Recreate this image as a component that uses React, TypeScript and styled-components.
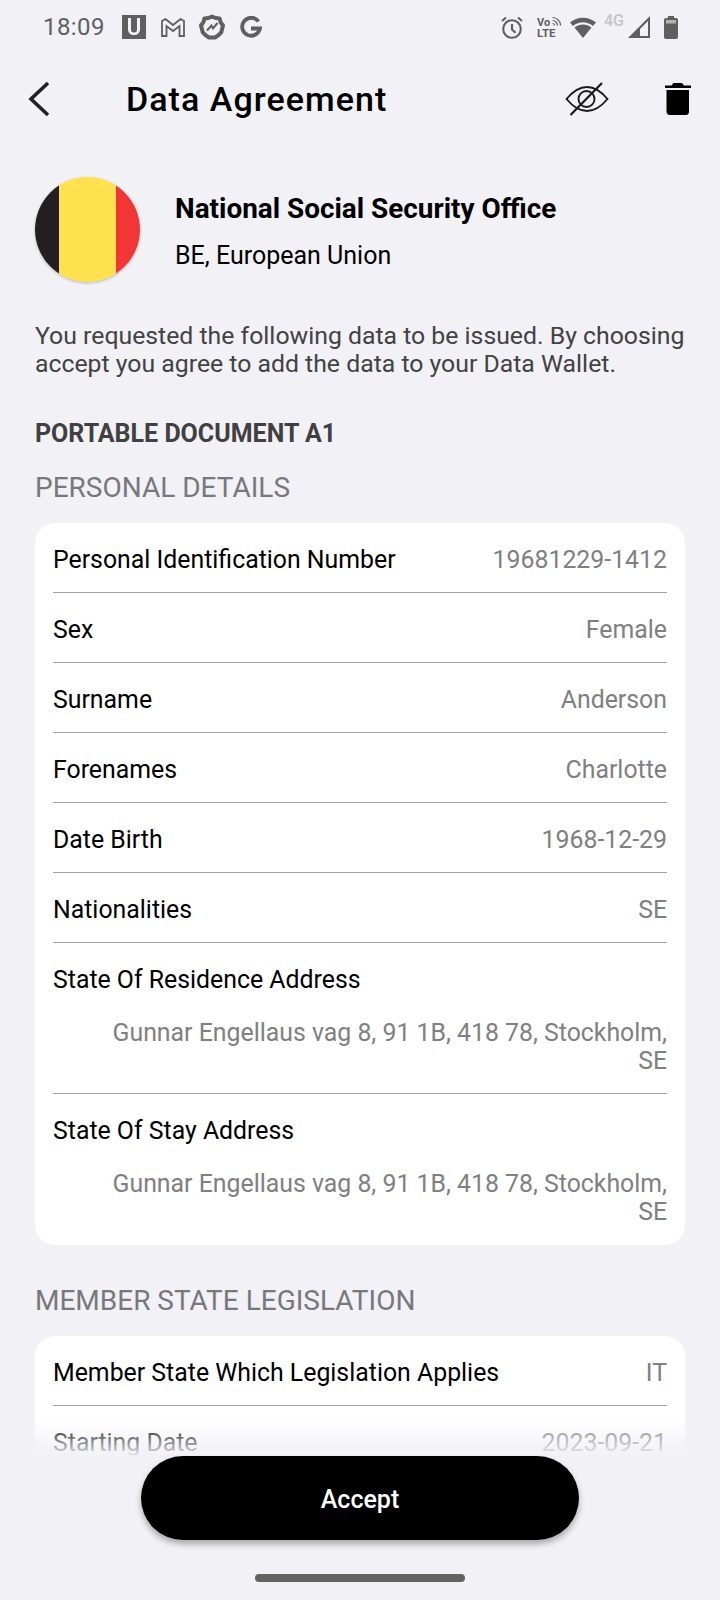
import React from "react";
import styled, { createGlobalStyle } from "styled-components";

const Global = createGlobalStyle`
  html, body { margin: 0; padding: 0; background: #f1f1f6; }
  * { box-sizing: border-box; }
`;

const Page = styled.div`
  width: 720px;
  height: 1600px;
  background: #f1f1f6;
  font-family: Roboto, "Liberation Sans", sans-serif;
  display: flex;
  flex-direction: column;
  overflow: hidden;
`;

const StatusBar = styled.div`
  height: 54px;
  flex: none;
  padding: 0 42px 0 43px;
  display: flex;
  align-items: center;
  color: #5f5f5f;
`;
const Time = styled.span`
  font-size: 24px;
  line-height: 34px;
  letter-spacing: 0.4px;
`;
const StatusIcon = styled.span<{ $gap: number }>`
  display: flex;
  margin-left: ${(p) => p.$gap}px;
`;
const StatusRight = styled.div`
  margin-left: auto;
  display: flex;
  align-items: center;
`;
const FourG = styled.span`
  margin: -12px 0 0 8px;
  font-size: 16px;
  line-height: 16px;
  font-weight: 500;
  color: #c4c4c8;
`;

const Header = styled.header`
  height: 89px;
  flex: none;
  padding: 0 29px 0 28px;
  display: flex;
  align-items: center;
`;
const Title = styled.h1`
  margin: 0 0 0 74px;
  font-size: 34px;
  font-weight: 500;
  letter-spacing: 1.05px;
  color: #000;
  flex: 1;
`;
const IconSlot = styled.span<{ $gap?: number }>`
  display: flex;
  margin-left: ${(p) => p.$gap ?? 0}px;
`;

const Scroll = styled.main`
  position: relative;
  flex: 1;
  overflow: hidden;
  padding: 34px 35px 0;
`;
const Fade = styled.div`
  position: absolute;
  left: 0;
  right: 0;
  bottom: 0;
  height: 36px;
  background: linear-gradient(to bottom, rgba(241, 241, 246, 0), rgba(241, 241, 246, 0.92));
`;

const Org = styled.section`
  display: flex;
  align-items: center;
  gap: 35px;
`;
const Flag = styled.div`
  width: 105px;
  height: 105px;
  border-radius: 50%;
  flex: none;
  box-shadow: 0 1px 3px rgba(0, 0, 0, 0.25);
  background: linear-gradient(
    to right,
    #231f20 0 24px,
    #ffe04f 24px 81px,
    #f23636 81px 100%
  );
`;
const OrgText = styled.div`
  display: flex;
  flex-direction: column;
  gap: 15px;
  padding-top: 5px;
`;
const OrgName = styled.div`
  font-size: 27.9px;
  line-height: 32px;
  font-weight: 700;
  color: #000;
`;
const OrgPlace = styled.div`
  font-size: 25px;
  line-height: 32px;
  color: #000;
`;
const Intro = styled.p`
  margin: 40px 0 0;
  font-size: 24.8px;
  line-height: 28px;
  color: #424242;
`;
const DocTitle = styled.h2`
  margin: 40px 0 0;
  font-size: 25px;
  line-height: 32px;
  font-weight: 700;
  color: #404040;
`;
const SectionTitle = styled.h3<{ $top: number }>`
  margin: ${(p) => p.$top}px 0 0;
  font-size: 28px;
  line-height: 34px;
  font-weight: 400;
  color: #78787c;
`;
const Card = styled.div`
  margin-top: 18px;
  background: #fff;
  border-radius: 20px;
  padding: 0 18px;
`;
const Row = styled.div`
  height: 70px;
  padding-top: 3px;
  display: flex;
  align-items: center;
  justify-content: space-between;
  border-bottom: 1px solid #a3a3a3;
  &:last-child { border-bottom: 0; }
`;
const Label = styled.span`
  font-size: 24.85px;
  line-height: 25px;
  color: #000;
`;
const Value = styled.span`
  font-size: 24.85px;
  line-height: 25px;
  color: #808080;
`;
const StackRow = styled.div`
  height: 151px;
  padding-top: 23px;
  border-bottom: 1px solid #a3a3a3;
  &:last-child { border-bottom: 0; }
`;
const StackLabel = styled(Label)`
  display: block;
  line-height: 28px;
`;
const StackValue = styled(Value)`
  display: block;
  margin: 25px 0 0 auto;
  width: 565px;
  line-height: 28px;
  text-align: right;
`;

const Footer = styled.footer`
  height: 145px;
  flex: none;
  display: flex;
  flex-direction: column;
  align-items: center;
`;
const AcceptButton = styled.button`
  margin-top: 1px;
  width: 438px;
  height: 84px;
  border: 0;
  border-radius: 42px;
  background: #000;
  color: #fff;
  font-family: inherit;
  font-size: 25px;
  font-weight: 500;
  padding-top: 4px;
  box-shadow: 0 4px 6px rgba(0, 0, 0, 0.3);
`;
const HomeBar = styled.div`
  margin-top: 34px;
  width: 210px;
  height: 8px;
  border-radius: 4px;
  background: #636363;
`;

const Back = () => (
  <svg width="24" height="36" viewBox="0 0 24 36" fill="none" stroke="#222" strokeWidth="3.6">
    <path d="M20 2 3 18l17 16" />
  </svg>
);
const EyeOff = () => (
  <svg width="44" height="34" viewBox="0 0 44 34" fill="none" stroke="#1a1a1a" strokeWidth="1.9">
    <path d="M1.500 17C9 8 16 5 22 5s13 3 20.500 12C35 26 28 29 22 29S9 26 1.500 17Z" />
    <circle cx="21.500" cy="17" r="8" />
    <path d="M37 1 5.500 33" strokeWidth="2.200" />
  </svg>
);
const Trash = () => (
  <svg width="26" height="32" viewBox="0 0 26 32" fill="#000">
    <path d="M8.500 0h8.500l2 2.500H26v2.500H0V2.500h6.500Z" />
    <path d="M1.500 7h22.500v21.500a3.500 3.500 0 0 1-3.500 3.500H5a3.500 3.500 0 0 1-3.500-3.500Z" />
  </svg>
);
const U = () => (
  <svg width="24" height="24" viewBox="0 0 24 24">
    <path fill="#5f5f5f" fillRule="evenodd" d="M0 0h24v24H0ZM6 3v11.500c0 3.500 2.500 5.500 6 5.500s6-2 6-5.500V3h-3v11.500c0 2-1 3-3 3s-3-1-3-3V3Z" />
  </svg>
);
const M = () => (
  <svg width="24" height="19" viewBox="0 0 24 19" fill="none" stroke="#5f5f5f" strokeWidth="1.800">
    <path d="M1 18V3l3.500-2L12 7l7.500-6L23 3v15h-4.500V8L12 13 5.500 8v10Z" />
  </svg>
);
const Gear = () => (
  <svg width="26" height="26" viewBox="0 0 26 26" fill="none" stroke="#5f5f5f">
    <path strokeWidth="4" strokeLinejoin="round" d="M13 2.500l3.600 1.500 4 .4 1 3.900L24 11.500l-.9 3.400-.9 3.500-2.700 2.700L16 23.500H10l-3.500-2.400-2.700-2.700-.9-3.500L2 11.500l2.400-3.200 1-3.900 4-.4Z" />
    <path strokeWidth="2" d="M8 16.500l4.500-5 1.500 3 4.500-5.500" />
  </svg>
);
const G = () => (
  <svg width="22" height="22" viewBox="0 0 22 22" fill="none" stroke="#5f5f5f" strokeWidth="3.800">
    <path d="M18.500 5.500A9 9 0 1 0 20 12.500H11" />
  </svg>
);
const Alarm = () => (
  <svg width="22" height="23" viewBox="0 0 22 23" fill="none" stroke="#5f5f5f" strokeWidth="2.100">
    <circle cx="11" cy="13" r="8.800" />
    <path d="M11 8v5.500l3.500 3.200M1 5l4-3.500M21 5l-4-3.500" />
  </svg>
);
const VoLte = () => (
  <svg width="24" height="25" viewBox="0 0 24 25" fill="#5f5f5f" fontFamily="Roboto, sans-serif" fontWeight="700">
    <text x="0" y="10.500" fontSize="11">Vo</text>
    <text x="0" y="21.500" fontSize="11.500">LTE</text>
    <path d="M15.500 2.500a8 8 0 0 1 8 8M15.500 5.500a5 5 0 0 1 5 5M15.500 8.500a2 2 0 0 1 2 2" fill="none" stroke="#5f5f5f" strokeWidth="1.200" />
  </svg>
);
const Wifi = () => (
  <svg width="26" height="22" viewBox="0 0 26 22" fill="#5f5f5f">
    <path d="M13 22 4.500 11.500c5-4 12-4 17 0Z" />
    <path d="M0 6.500c7.500-6.500 18.500-6.500 26 0l-3 3.500c-6-5-14-5-20 0Z" />
  </svg>
);
const Signal = () => (
  <svg width="22" height="22" viewBox="0 0 22 22">
    <path fill="#5f5f5f" fillRule="evenodd" d="M22 0v22H0ZM20 5 12 13v7h8Z" />
  </svg>
);
const Battery = () => (
  <svg width="14" height="23" viewBox="0 0 14 23">
    <path fill="#5f5f5f" d="M4 0h6v2h2a2 2 0 0 1 2 2v17a2 2 0 0 1-2 2H2a2 2 0 0 1-2-2V4a2 2 0 0 1 2-2h2Z" />
    <path fill="#b4b4b6" d="M2 4h10v3.500H2Z" />
  </svg>
);

const rows: [string, string][] = [
  ["Personal Identification Number", "19681229-1412"],
  ["Sex", "Female"],
  ["Surname", "Anderson"],
  ["Forenames", "Charlotte"],
  ["Date Birth", "1968-12-29"],
  ["Nationalities", "SE"],
];
const stacked = ["State Of Residence Address", "State Of Stay Address"];

export default function App() {
  return (
    <Page>
      <Global />
      <StatusBar>
        <Time>18:09</Time>
        <StatusIcon $gap={17}><U /></StatusIcon>
        <StatusIcon $gap={15}><M /></StatusIcon>
        <StatusIcon $gap={14}><Gear /></StatusIcon>
        <StatusIcon $gap={15}><G /></StatusIcon>
        <StatusRight>
          <StatusIcon $gap={0}><Alarm /></StatusIcon>
          <StatusIcon $gap={14}><VoLte /></StatusIcon>
          <StatusIcon $gap={9}><Wifi /></StatusIcon>
          <FourG>4G</FourG>
          <StatusIcon $gap={4}><Signal /></StatusIcon>
          <StatusIcon $gap={14}><Battery /></StatusIcon>
        </StatusRight>
      </StatusBar>
      <Header>
        <Back />
        <Title>Data Agreement</Title>
        <IconSlot><EyeOff /></IconSlot>
        <IconSlot $gap={56}><Trash /></IconSlot>
      </Header>
      <Scroll>
        <Org>
          <Flag />
          <OrgText>
            <OrgName>National Social Security Office</OrgName>
            <OrgPlace>BE, European Union</OrgPlace>
          </OrgText>
        </Org>
        <Intro>You requested the following data to be issued. By choosing accept you agree to add the data to your Data Wallet.</Intro>
        <DocTitle>PORTABLE DOCUMENT A1</DocTitle>
        <SectionTitle $top={21}>PERSONAL DETAILS</SectionTitle>
        <Card>
          {rows.map(([l, v]) => (
            <Row key={l}><Label>{l}</Label><Value>{v}</Value></Row>
          ))}
          {stacked.map((l) => (
            <StackRow key={l}>
              <StackLabel>{l}</StackLabel>
              <StackValue>Gunnar Engellaus vag 8, 91 1B, 418 78, Stockholm, SE</StackValue>
            </StackRow>
          ))}
        </Card>
        <SectionTitle $top={39}>MEMBER STATE LEGISLATION</SectionTitle>
        <Card>
          <Row><Label>Member State Which Legislation Applies</Label><Value>IT</Value></Row>
          <Row><Label>Starting Date</Label><Value>2023-09-21</Value></Row>
        </Card>
        <Fade />
      </Scroll>
      <Footer>
        <AcceptButton>Accept</AcceptButton>
        <HomeBar />
      </Footer>
    </Page>
  );
}
